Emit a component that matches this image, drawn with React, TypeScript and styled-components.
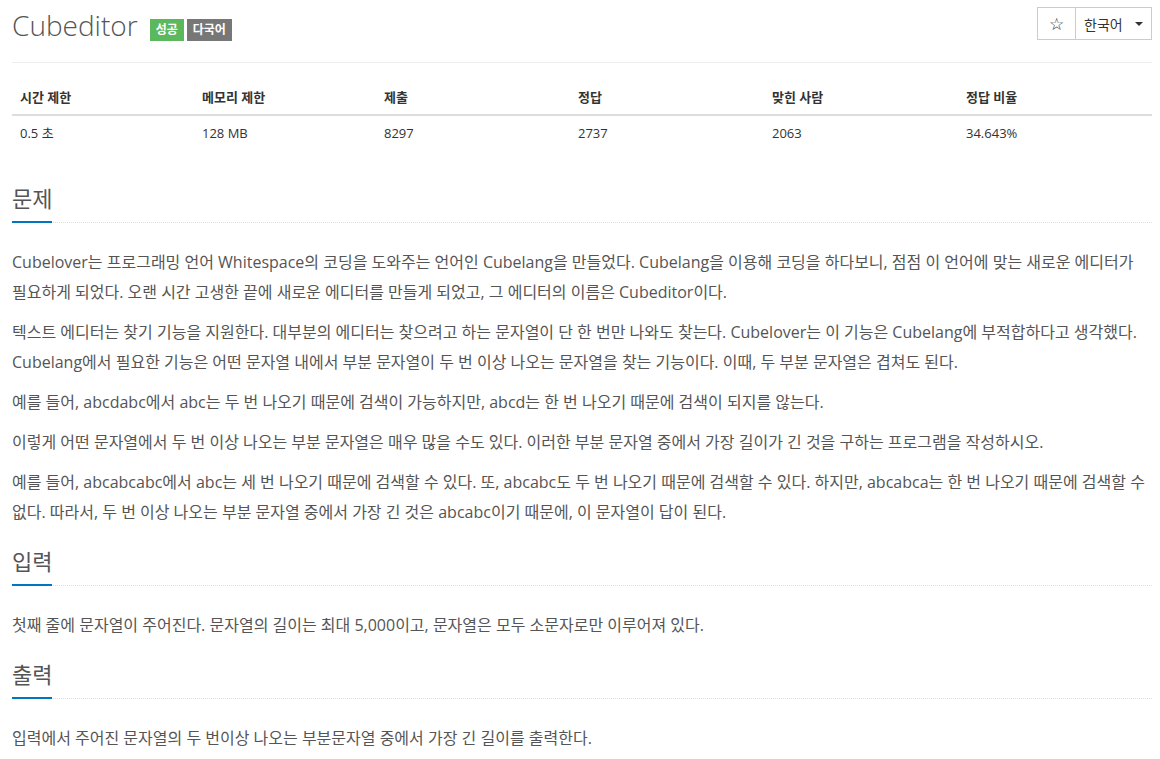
import styled, { createGlobalStyle } from 'styled-components';

const GlobalStyle = createGlobalStyle`
  html, body {
    margin: 0;
    padding: 0;
    background: #fff;
  }
  body {
    font-family: 'Open Sans', 'Noto Sans CJK KR', sans-serif;
    color: #555;
  }
`;

const stats = [
  { label: '시간 제한', value: '0.5 초' },
  { label: '메모리 제한', value: '128 MB' },
  { label: '제출', value: '8297' },
  { label: '정답', value: '2737' },
  { label: '맞힌 사람', value: '2063' },
  { label: '정답 비율', value: '34.643%' },
];

const sections = [
  {
    title: '문제',
    paragraphs: [
      'Cubelover는 프로그래밍 언어 Whitespace의 코딩을 도와주는 언어인 Cubelang을 만들었다. Cubelang을 이용해 코딩을 하다보니, 점점 이 언어에 맞는 새로운 에디터가 필요하게 되었다. 오랜 시간 고생한 끝에 새로운 에디터를 만들게 되었고, 그 에디터의 이름은 Cubeditor이다.',
      '텍스트 에디터는 찾기 기능을 지원한다. 대부분의 에디터는 찾으려고 하는 문자열이 단 한 번만 나와도 찾는다. Cubelover는 이 기능은 Cubelang에 부적합하다고 생각했다. Cubelang에서 필요한 기능은 어떤 문자열 내에서 부분 문자열이 두 번 이상 나오는 문자열을 찾는 기능이다. 이때, 두 부분 문자열은 겹쳐도 된다.',
      '예를 들어, abcdabc에서 abc는 두 번 나오기 때문에 검색이 가능하지만, abcd는 한 번 나오기 때문에 검색이 되지를 않는다.',
      '이렇게 어떤 문자열에서 두 번 이상 나오는 부분 문자열은 매우 많을 수도 있다. 이러한 부분 문자열 중에서 가장 길이가 긴 것을 구하는 프로그램을 작성하시오.',
      '예를 들어, abcabcabc에서 abc는 세 번 나오기 때문에 검색할 수 있다. 또, abcabc도 두 번 나오기 때문에 검색할 수 있다. 하지만, abcabca는 한 번 나오기 때문에 검색할 수 없다. 따라서, 두 번 이상 나오는 부분 문자열 중에서 가장 긴 것은 abcabc이기 때문에, 이 문자열이 답이 된다.',
    ],
  },
  {
    title: '입력',
    paragraphs: ['첫째 줄에 문자열이 주어진다. 문자열의 길이는 최대 5,000이고, 문자열은 모두 소문자로만 이루어져 있다.'],
  },
  {
    title: '출력',
    paragraphs: ['입력에서 주어진 문자열의 두 번이상 나오는 부분문자열 중에서 가장 긴 길이를 출력한다.'],
  },
];

const App = () => {
  return (
    <Page>
      <GlobalStyle />
      <Header>
        <TitleRow>
          <Title>Cubeditor</Title>
          <Badge $color="#5cb85c">성공</Badge>
          <Badge $color="#777">다국어</Badge>
        </TitleRow>
        <BtnGroup>
          <StarBtn>☆</StarBtn>
          <LangBtn>
            한국어 <Caret />
          </LangBtn>
        </BtnGroup>
      </Header>

      <StatsTable>
        {stats.map((s) => (
          <StatHead key={s.label}>{s.label}</StatHead>
        ))}
        {stats.map((s) => (
          <StatCell key={s.label}>{s.value}</StatCell>
        ))}
      </StatsTable>

      {sections.map((sec) => (
        <Section key={sec.title}>
          <Headline>
            <SectionTitle>{sec.title}</SectionTitle>
          </Headline>
          <ProblemText>
            {sec.paragraphs.map((p, i) => (
              <p key={i}>{p}</p>
            ))}
          </ProblemText>
        </Section>
      ))}
    </Page>
  );
};

export default App;

const Page = styled.div`
  box-sizing: border-box;
  width: 1160px;
  padding: 0 8px 0 12px;
`;

const Header = styled.div`
  display: flex;
  justify-content: space-between;
  align-items: flex-start;
  padding-top: 7px;
  padding-bottom: 20px;
  border-bottom: 1px solid #eee;
`;

const TitleRow = styled.div`
  display: flex;
  align-items: flex-start;
  gap: 3px;
`;

const Title = styled.h1`
  margin: 0 9px 0 0;
  padding-top: 2px;
  font-size: 28px;
  font-weight: 300;
  line-height: 33px;
  color: #555;
`;

const Badge = styled.span<{ $color: string }>`
  margin-top: 12px;
  height: 22px;
  padding: 0 6px;
  line-height: 22px;
  font-size: 12px;
  font-weight: 700;
  color: #fff;
  background: ${(p) => p.$color};
`;

const BtnGroup = styled.div`
  display: flex;
  height: 33px;
  border: 1px solid #ccc;
  box-sizing: border-box;
`;

const StarBtn = styled.button`
  width: 38px;
  border: 0;
  border-right: 1px solid #ccc;
  background: #fff;
  font-family: 'DejaVu Sans', sans-serif;
  font-size: 17px;
  color: #333;
  padding: 0;
`;

const LangBtn = styled.button`
  display: flex;
  align-items: center;
  gap: 12px;
  width: 75px;
  border: 0;
  background: #fff;
  font-family: 'Open Sans', 'Noto Sans CJK KR', sans-serif;
  font-size: 14px;
  color: #333;
  padding: 0 0 0 8px;
`;

const Caret = styled.span`
  width: 0;
  height: 0;
  border-top: 4px solid #333;
  border-left: 4px solid transparent;
  border-right: 4px solid transparent;
`;

const StatsTable = styled.div`
  display: grid;
  grid-template-columns: 182px 182px 194px 194px 194px 194px;
  margin-top: 17px;
  font-size: 13px;
  color: #333;
`;

const StatHead = styled.div`
  padding: 8px;
  line-height: 18px;
  font-weight: 700;
  border-bottom: 2px solid #ddd;
`;

const StatCell = styled.div`
  padding: 8px;
  line-height: 18px;
`;

const Section = styled.section`
  margin-top: 19px;
  &:first-of-type {
    margin-top: 33px;
  }
`;

const Headline = styled.div`
  border-bottom: 1px dotted #ddd;
`;

const SectionTitle = styled.h2`
  display: inline-block;
  margin: 0 0 -1px;
  padding-bottom: 8px;
  font-size: 22px;
  font-weight: 400;
  line-height: 30px;
  color: #555;
  border-bottom: 2px solid #0076c0;
`;

const ProblemText = styled.div`
  margin-top: 24px;
  font-size: 16px;
  line-height: 30px;
  word-break: keep-all;
  p {
    margin: 0 0 10px;
  }
`;
